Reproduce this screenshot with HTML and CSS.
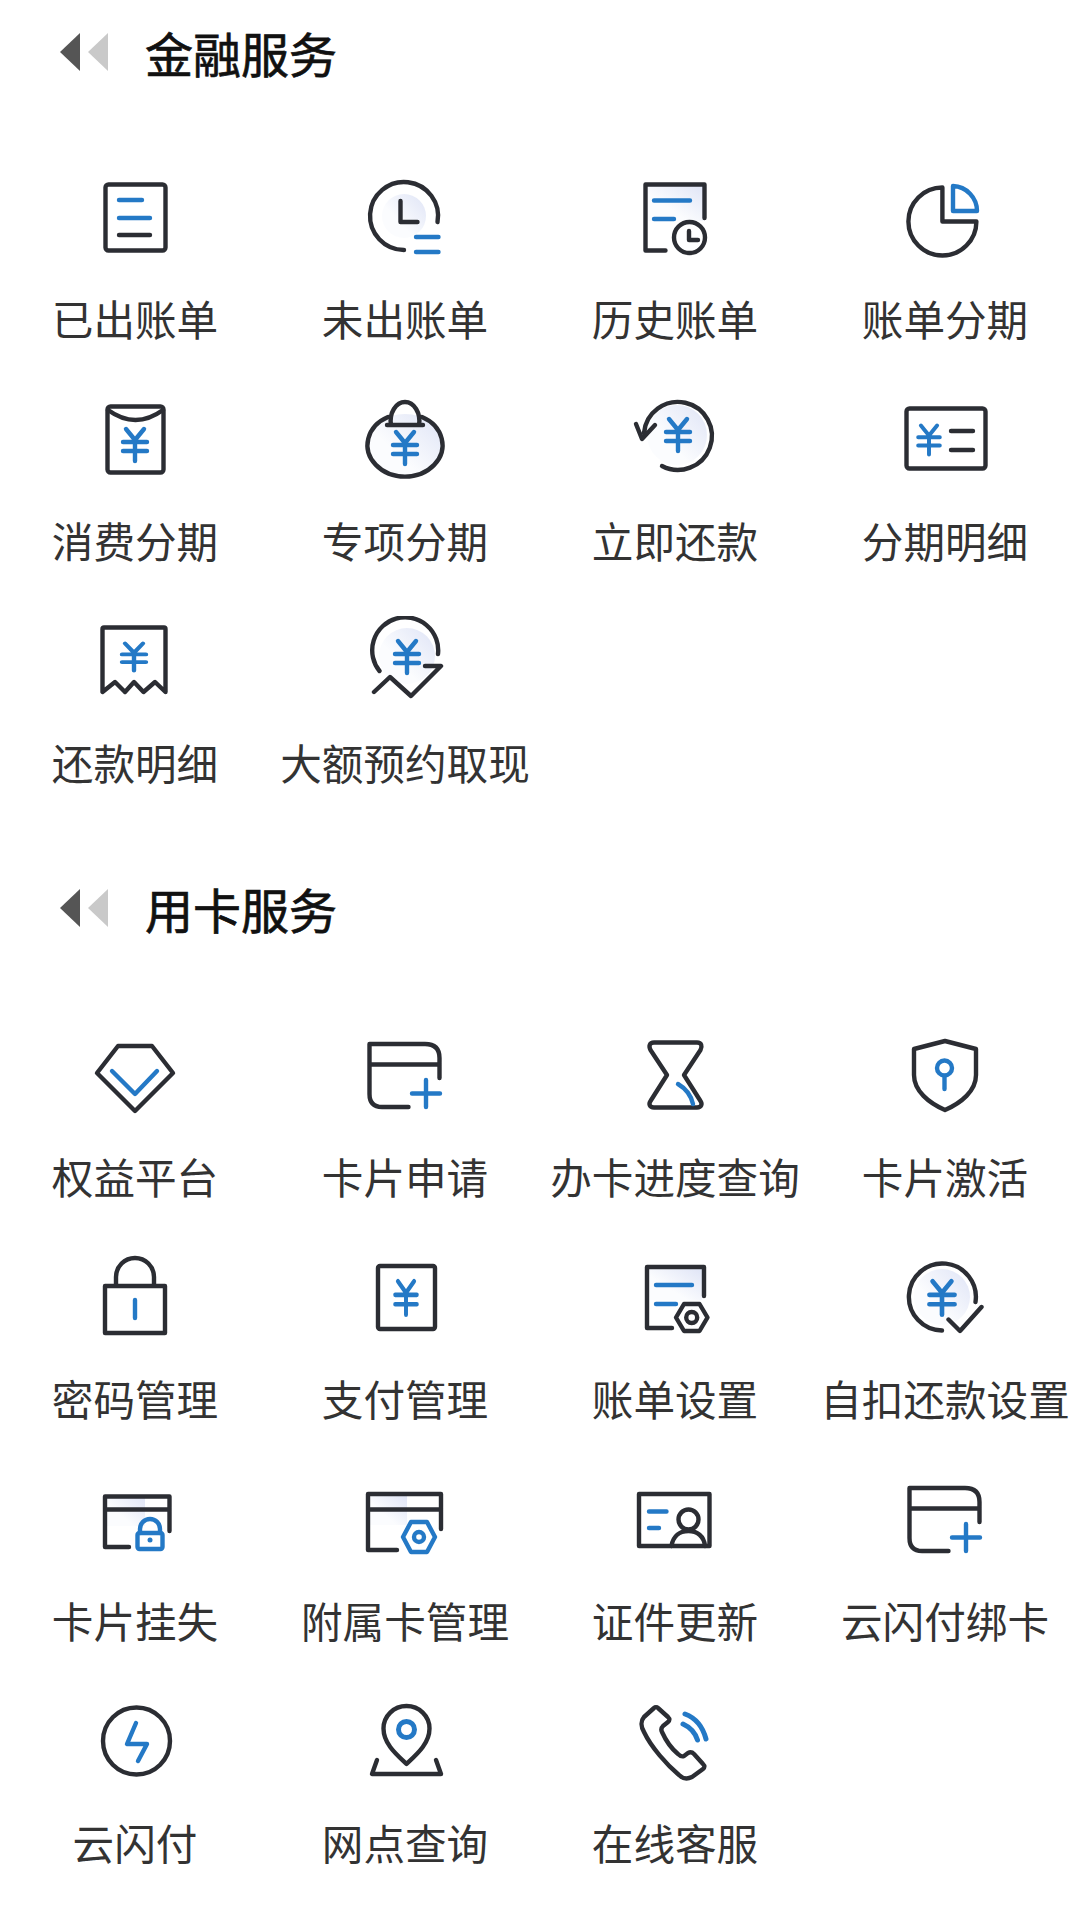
FILE: index.html
```html
<!DOCTYPE html>
<html lang="zh-CN">
<head>
    <meta charset="UTF-8">
    <title>服务</title>
    <link rel="stylesheet" href="styles.css">
</head>
<body>
    <svg class="defs" width="0" height="0">
        <defs>
            <linearGradient id="tint" x1="1" y1="0" x2="0.35" y2="0.6">
                <stop offset="0" stop-color="#dfe4f6"/>
                <stop offset="1" stop-color="#fbfcfe"/>
            </linearGradient>
            <path id="yen" d="M-9-16L0-5L9-16M-12-3H12M-12 6H12M0-5V16"/>
        </defs>
    </svg>

    <section class="section">
        <h2 class="section-title"><span class="arrow arrow-dark"></span><span class="arrow arrow-light"></span><span class="title-text">金融服务</span></h2>
        <div class="grid">
            <div class="item">
                <svg class="icon" viewBox="-45 -45 90 90"><rect class="ln" x="-29.5" y="-32.5" width="60" height="66" rx="3" fill="url(#tint)"/><path class="bl" d="M-16-17H7M-16 1H15"/><path class="ln" d="M-16 18H15"/></svg>
                <div class="label">已出账单</div>
            </div>
            <div class="item">
                <svg class="icon" viewBox="-45 -45 90 90"><circle cx="-1" cy="-1" r="22" fill="url(#tint)"/><path class="ln" d="M32.5 5A34 34 0 1 0-1 33M-4.5-16V5H12.5"/><path class="bl" d="M11 20H33.5M11 35H33.5"/></svg>
                <div class="label">未出账单</div>
            </div>
            <div class="item">
                <svg class="icon" viewBox="-45 -45 90 90"><rect x="-29" y="-32" width="58" height="36" fill="url(#tint)"/><path class="ln" d="M29.5 1V-32.5H-29.5V33.5H-9.5"/><circle class="ln" cx="14.5" cy="20.5" r="15.5"/><path class="ln" d="M14 14V23H23"/><path class="bl" d="M-21-16.5H15M-21 2H-1"/></svg>
                <div class="label">历史账单</div>
            </div>
            <div class="item">
                <svg class="icon" viewBox="-45 -45 90 90"><path class="ln" d="M-2.6-29.5V4.5H31.4A34 34 0 1 1-2.6-29.5Z"/><path class="bl" d="M8-31V-6H32A25 25 0 0 0 8-31Z" fill="url(#tint)"/></svg>
                <div class="label">账单分期</div>
            </div>
            <div class="item">
                <svg class="icon" viewBox="-45 -45 90 90"><rect class="ln" x="-27.5" y="-32.5" width="56" height="66" rx="3" fill="url(#tint)"/><path class="ln" d="M-27-29Q0.5-9 28-29"/><use class="bl" href="#yen" x="0" y="6"/></svg>
                <div class="label">消费分期</div>
            </div>
            <div class="item">
                <svg class="icon" viewBox="-45 -45 90 90"><ellipse cx="0" cy="6" rx="36" ry="31" fill="url(#tint)"/><path class="ln" d="M-17-22A37.5 31.5 0 1 0 17-22"/><path class="ln" d="M-14-14C-16-26-9-37 0-37C9-37 16-26 14-14M-18-14H18"/><use class="bl" href="#yen" x="0" y="9"/></svg>
                <div class="label">专项分期</div>
            </div>
            <div class="item">
                <svg class="icon" viewBox="-45 -45 90 90"><circle cx="2" cy="-4" r="30" fill="url(#tint)"/><path class="ln" d="M-13 27A34 34 0 1 0-31-6M-39-15L-33 0L-20-14"/><use class="bl" href="#yen" x="3" y="-4"/></svg>
                <div class="label">立即还款</div>
            </div>
            <div class="item">
                <svg class="icon" viewBox="-45 -45 90 90"><rect class="ln" x="-38.5" y="-30.5" width="79" height="60" rx="3" fill="url(#tint)"/><use class="bl" href="#yen" transform="translate(-16 1) scale(.9)"/><path class="ln" d="M6-8H28M6 11H28"/></svg>
                <div class="label">分期明细</div>
            </div>
            <div class="item">
                <svg class="icon" viewBox="-45 -45 90 90"><path class="ln" d="M-32.5 31V-32Q-32.5-33.5-31-33.5H29Q30.5-33.5 30.5-32V31L20 21L8.5 31L-1 21L-10 31L-20 21Z" fill="url(#tint)"/><use class="bl" href="#yen" transform="translate(-1 -4) scale(1 .85)"/></svg>
                <div class="label">还款明细</div>
            </div>
            <div class="item">
                <svg class="icon" viewBox="-45 -45 90 90"><circle cx="2" cy="-5" r="28" fill="url(#tint)"/><path class="ln" d="M33-7A33 33 0 1 0-25.5 10M-31 31L-15 16L6 35L36 5H20"/><use class="bl" href="#yen" transform="translate(2 -4)"/></svg>
                <div class="label">大额预约取现</div>
            </div>
        </div>
    </section>

    <section class="section">
        <h2 class="section-title"><span class="arrow arrow-dark"></span><span class="arrow arrow-light"></span><span class="title-text">用卡服务</span></h2>
        <div class="grid">
            <div class="item">
                <svg class="icon" viewBox="-45 -45 90 90"><path class="ln" d="M-38-2L-17-29H17L38-2L0 36Z" fill="url(#tint)"/><path class="bl" d="M-23-4L0 19L22-4"/></svg>
                <div class="label">权益平台</div>
            </div>
            <div class="item">
                <svg class="icon" viewBox="-45 -45 90 90"><path class="ln" d="M3.5 32H-23Q-35.5 32-35.5 19V-31H20Q34.5-31 34.5-17V3M-35.5-10.5H34.5"/><path class="bl" d="M7 18.5H35M21 5V32"/></svg>
                <div class="label">卡片申请</div>
            </div>
            <div class="item">
                <svg class="icon" viewBox="-45 -45 90 90"><path class="ln" d="M-21-32.5H22C26.5-32.5 27.5-29 25.5-25L9 0L25.5 26C27.5 29 26.5 32.5 22 32.5H-21C-25.5 32.5-26.5 29-24.5 26L-8 0L-24.5-25C-26.5-29-25.5-32.5-21-32.5Z" fill="url(#tint)"/><path class="bl" d="M3 9Q15 16 18 29"/></svg>
                <div class="label">办卡进度查询</div>
            </div>
            <div class="item">
                <svg class="icon" viewBox="-45 -45 90 90"><path class="ln" d="M0-34L31-26V0C31 16 16 28 0 35C-16 28-31 16-31 0V-26Z" fill="url(#tint)"/><circle class="bl" cx="-.5" cy="-7" r="7.5"/><path class="bl" d="M-.5 1V14"/></svg>
                <div class="label">卡片激活</div>
            </div>
            <div class="item">
                <svg class="icon" viewBox="-45 -45 90 90"><path class="ln" d="M-19-12V-20A19 19 0 0 1 19-20V-12"/><rect class="ln" x="-30" y="-11" width="60" height="47" fill="url(#tint)"/><path class="bl" d="M0 3V21"/></svg>
                <div class="label">密码管理</div>
            </div>
            <div class="item">
                <svg class="icon" viewBox="-45 -45 90 90"><rect class="ln" x="-27" y="-31" width="57" height="63" rx="2" fill="url(#tint)"/><use class="bl" href="#yen" transform="translate(1 1) scale(.9 1.05)"/></svg>
                <div class="label">支付管理</div>
            </div>
            <div class="item">
                <svg class="icon" viewBox="-45 -45 90 90"><rect x="-27" y="-29" width="54" height="32" fill="url(#tint)"/><path class="ln" d="M29-1V-30H-28V31H-3"/><path class="ln" d="M1 20.5L9 7H24.5L32.5 20.5L24.5 34H9Z"/><circle class="ln" cx="16.7" cy="20.5" r="5.5"/><path class="bl" d="M-19-12H17M-19 7H1"/></svg>
                <div class="label">账单设置</div>
            </div>
            <div class="item">
                <svg class="icon" viewBox="-45 -45 90 90"><circle cx="-3" cy="0" r="28" fill="url(#tint)"/><path class="ln" d="M30.5 5A33.5 33.5 0 1 0-3 33.5M3.5 22.5L15 34L36.5 10"/><use class="bl" href="#yen" transform="translate(-3 1) scale(1.05)"/></svg>
                <div class="label">自扣还款设置</div>
            </div>
            <div class="item">
                <svg class="icon" viewBox="-45 -45 90 90"><rect x="-30" y="-23" width="40" height="30" fill="url(#tint)"/><path class="ln" d="M34.5 12V-22.5H-30V28H-6M-30-9.5H34.5"/><path class="bl" d="M5 14V10A10 10 0 0 1 25 10V14"/><rect class="bl" x="2.5" y="14" width="25" height="16" rx="2"/><circle class="dot" cx="15" cy="21" r="2.5"/></svg>
                <div class="label">卡片挂失</div>
            </div>
            <div class="item">
                <svg class="icon" viewBox="-45 -45 90 90"><rect x="-36" y="-24" width="38" height="30" fill="url(#tint)"/><path class="ln" d="M36 10V-25H-37V31H-8M-37-9.5H36"/><path class="bl" d="M-2 18L6 3H22L30 18L22 33H6Z"/><circle class="bl" cx="14" cy="18" r="5"/></svg>
                <div class="label">附属卡管理</div>
            </div>
            <div class="item">
                <svg class="icon" viewBox="-45 -45 90 90"><rect class="ln" x="-36" y="-25" width="70.5" height="52" fill="url(#tint)"/><path class="bl" d="M-26-7.5H-8.5M-26 9H-16"/><circle class="ln" cx="13.5" cy="0.5" r="10"/><path class="ln" d="M-3.5 27C-2 17 5 12 13.5 12C22 12 29 17 30 27"/></svg>
                <div class="label">证件更新</div>
            </div>
            <div class="item">
                <svg class="icon" viewBox="-45 -45 90 90"><path class="ln" d="M3.5 32H-23Q-35.5 32-35.5 19V-31H20Q34.5-31 34.5-17V3M-35.5-10.5H34.5"/><path class="bl" d="M7 18.5H35M21 5V32"/></svg>
                <div class="label">云闪付绑卡</div>
            </div>
            <div class="item">
                <svg class="icon" viewBox="-45 -45 90 90"><circle class="ln" cx="1.5" cy="0" r="33.5" fill="url(#tint)"/><path class="bl" d="M1-18L-8 3H12L3 20"/></svg>
                <div class="label">云闪付</div>
            </div>
            <div class="item">
                <svg class="icon" viewBox="-45 -45 90 90"><path class="ln" d="M1.5 23C-8 14-21.5 3-21.5-12.5A23 22.5 0 0 1 24.5-12.5C24.5 3 11 14 1.5 23Z" fill="url(#tint)"/><circle class="bl bl-thick" cx="1.5" cy="-11.5" r="8"/><path class="ln" d="M-28 19L-33 33H36L31 19"/></svg>
                <div class="label">网点查询</div>
            </div>
            <div class="item">
                <svg class="icon" viewBox="-45 -45 90 90"><path class="ln" d="M-21-33L-31-24C-34.5-20-34-14-31-9C-24 6-8 24 4 34C8 38 13 38 17 36L28 28C30 26 30 25 28 23L19 13C17 11 15 11 13 12L9 15C7 16 5 15 3 13C-3 8-9 0-13-9C-14-11-14-13-12-15L-7-19C-5-21-5-22-7-24L-17-33C-18-34-20-34-21-33Z" fill="url(#tint)"/><path class="bl bl-thick" d="M10-27Q26-21 31-2M8-17Q19-12 22.5-1"/></svg>
                <div class="label">在线客服</div>
            </div>
        </div>
    </section>
</body>
</html>
```

FILE: styles.css
```css
body {
    margin: 0;
    padding: 20px 0 0;
    background: #fff;
    font-family: "Noto Sans CJK SC", "Noto Sans", sans-serif;
}
.defs {
    position: absolute;
}
.section {
    margin-bottom: 86px;
}
.section:last-child {
    margin-bottom: 0;
}
.section-title {
    display: flex;
    align-items: center;
    height: 64px;
    margin: 0 0 88px;
    padding-left: 60px;
    font-size: 48px;
    font-weight: 400;
    line-height: 64px;
    color: #111;
    -webkit-text-stroke: 0.7px #111;
}
.section + .section .section-title {
    margin-bottom: 90px;
}
.arrow {
    width: 0;
    height: 0;
    border-top: 19px solid transparent;
    border-bottom: 19px solid transparent;
}
.arrow-dark {
    border-right: 20px solid #555;
}
.arrow-light {
    margin-left: 8px;
    border-right: 20px solid #c9c9c9;
}
.title-text {
    margin-left: 37px;
}
.grid {
    display: grid;
    grid-template-columns: repeat(4, 270px);
    row-gap: 48px;
}
.item {
    display: flex;
    flex-direction: column;
    align-items: center;
    gap: 28px;
}
.icon {
    display: block;
    width: 90px;
    height: 90px;
    fill: none;
    stroke-linejoin: round;
    stroke-linecap: round;
}
.label {
    font-size: 41.6px;
    line-height: 56px;
    color: #333;
    white-space: nowrap;
}
.ln {
    fill: none;
    stroke: #2b2d33;
    stroke-width: 4.4;
}
.bl {
    fill: none;
    stroke: #2479c6;
    stroke-width: 4.4;
}
.bl-thick {
    stroke-width: 5;
}
.dot {
    fill: #2479c6;
}
```
